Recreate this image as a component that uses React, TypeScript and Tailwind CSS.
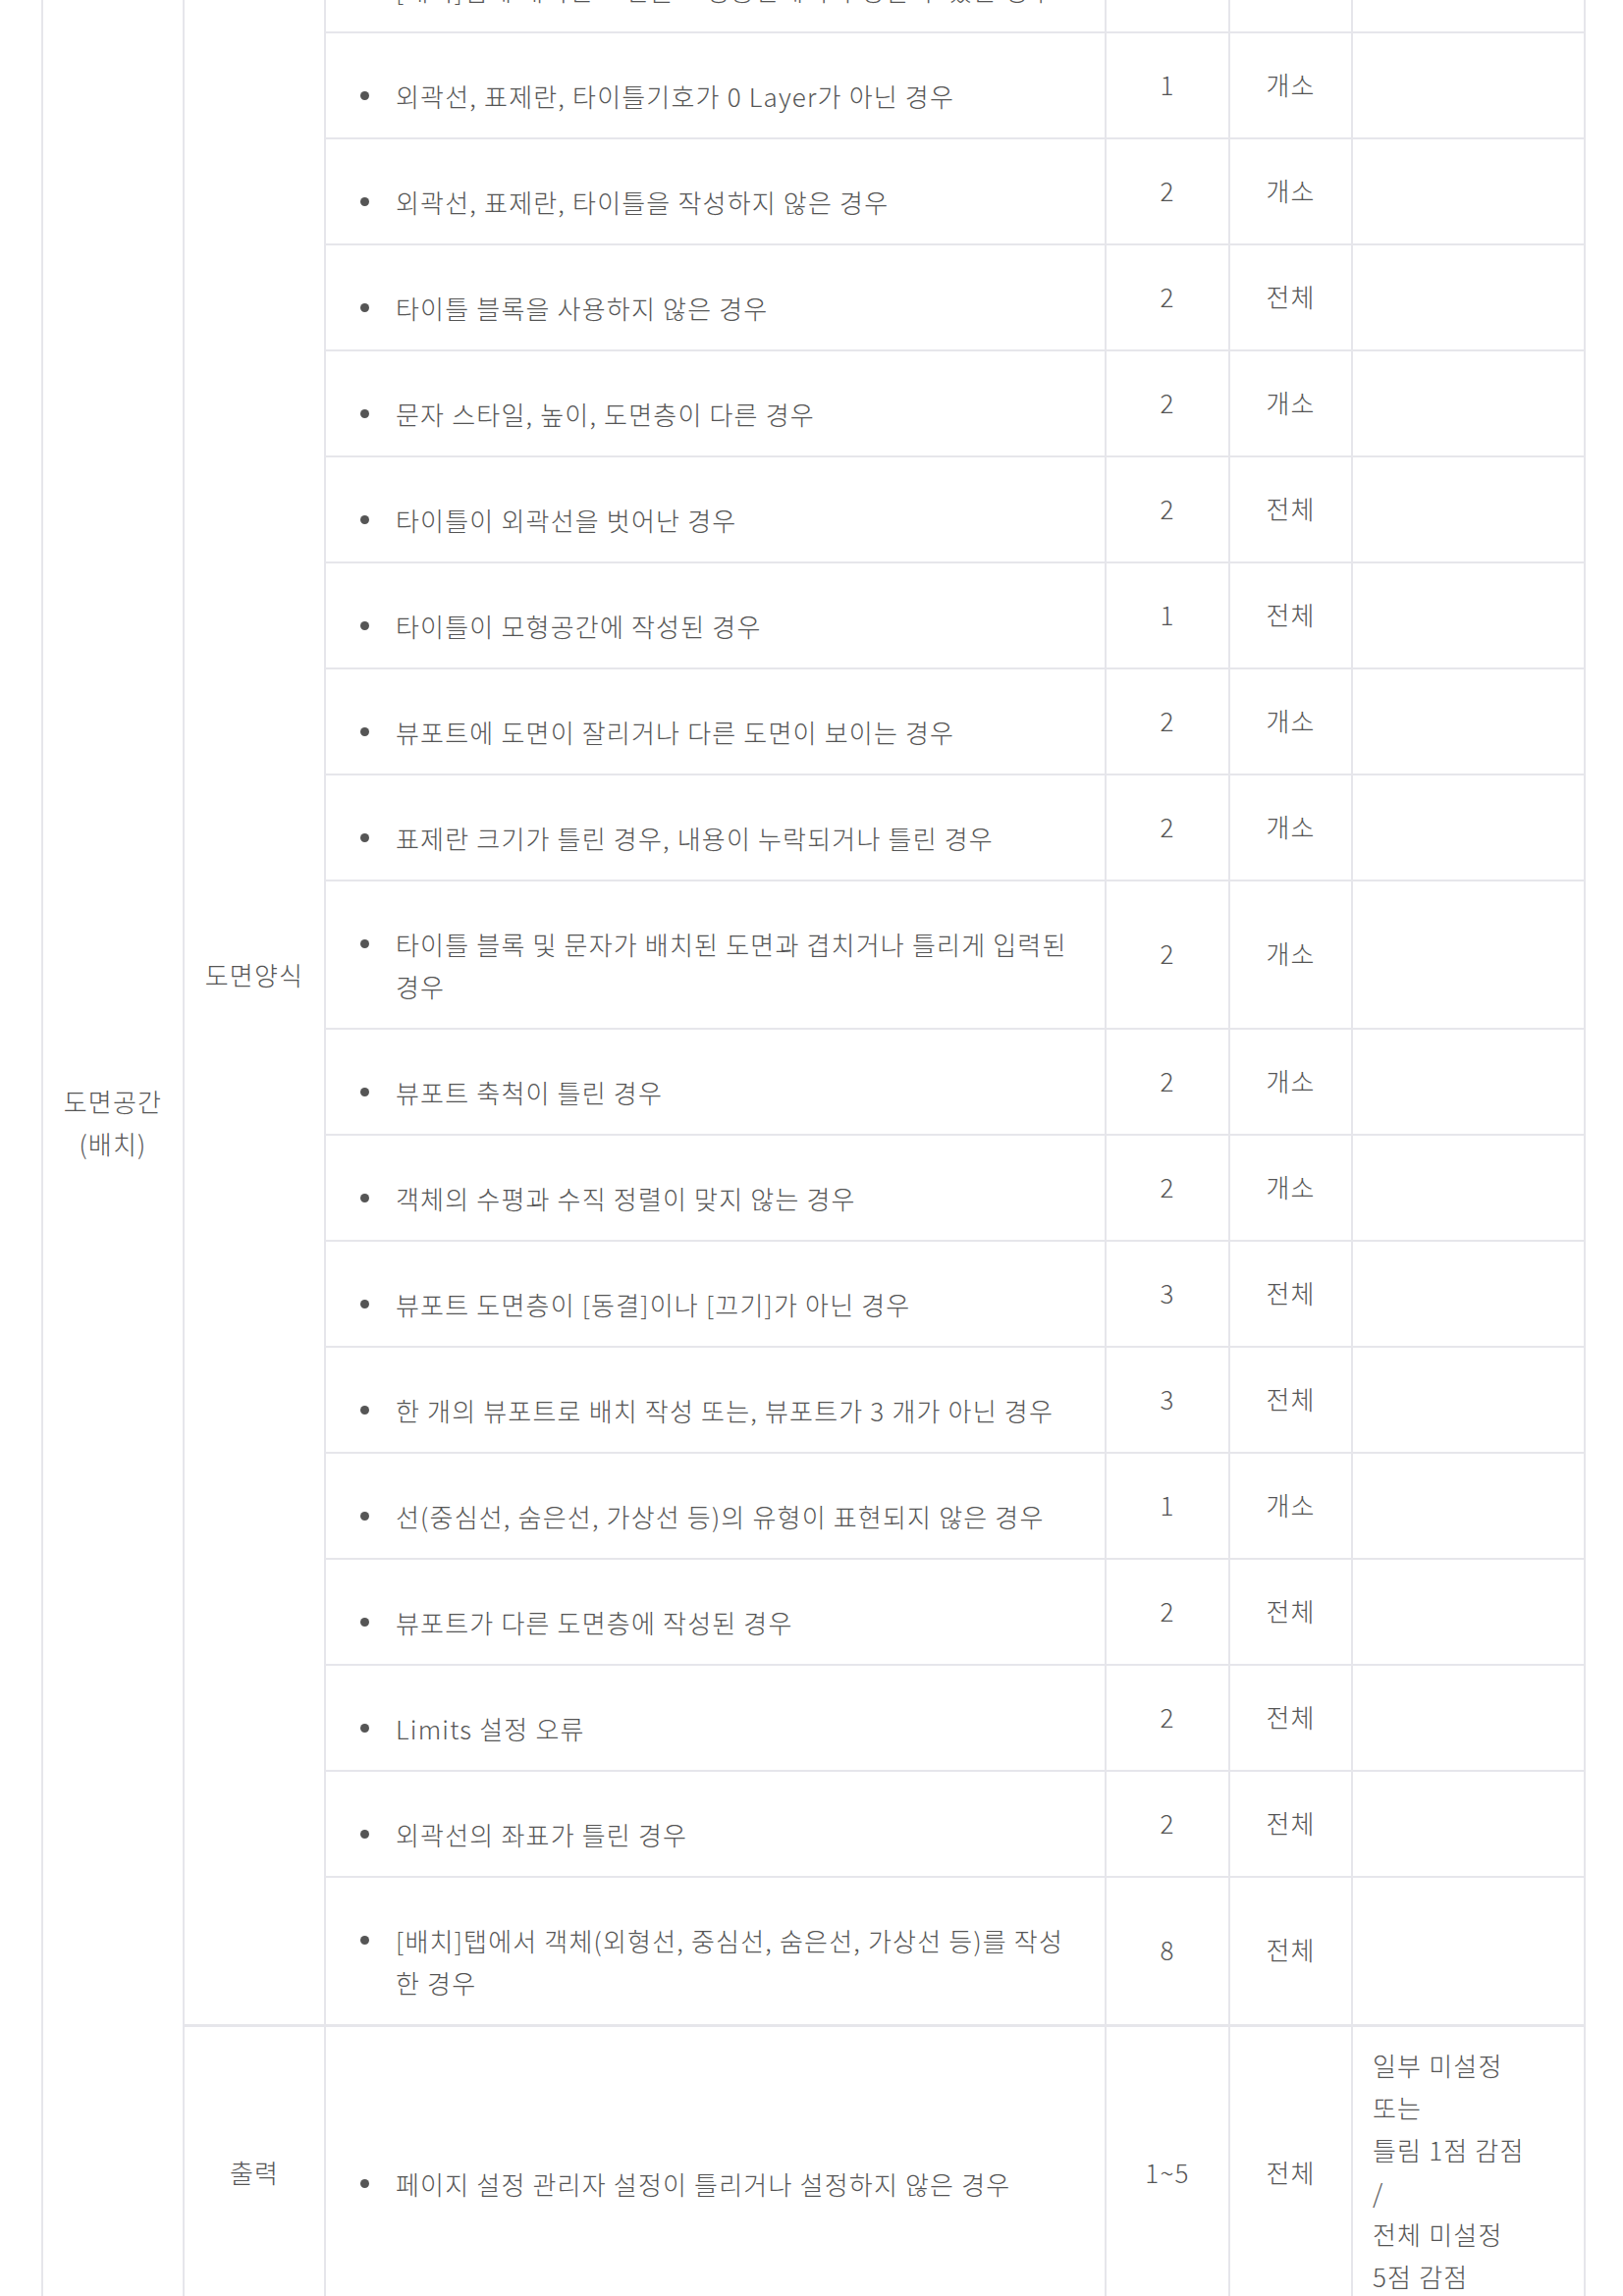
import React from 'react';

type Item = { text: string; score: string; unit: string };

const layoutItems: Item[] = [
    { text: '[배치]탭에 배치된 도면을 모형공간에서 수정할 수 있는 경우', score: '2', unit: '개소' },
    { text: '외곽선, 표제란, 타이틀기호가 0 Layer가 아닌 경우', score: '1', unit: '개소' },
    { text: '외곽선, 표제란, 타이틀을 작성하지 않은 경우', score: '2', unit: '개소' },
    { text: '타이틀 블록을 사용하지 않은 경우', score: '2', unit: '전체' },
    { text: '문자 스타일, 높이, 도면층이 다른 경우', score: '2', unit: '개소' },
    { text: '타이틀이 외곽선을 벗어난 경우', score: '2', unit: '전체' },
    { text: '타이틀이 모형공간에 작성된 경우', score: '1', unit: '전체' },
    { text: '뷰포트에 도면이 잘리거나 다른 도면이 보이는 경우', score: '2', unit: '개소' },
    { text: '표제란 크기가 틀린 경우, 내용이 누락되거나 틀린 경우', score: '2', unit: '개소' },
    { text: '타이틀 블록 및 문자가 배치된 도면과 겹치거나 틀리게 입력된 경우', score: '2', unit: '개소' },
    { text: '뷰포트 축척이 틀린 경우', score: '2', unit: '개소' },
    { text: '객체의 수평과 수직 정렬이 맞지 않는 경우', score: '2', unit: '개소' },
    { text: '뷰포트 도면층이 [동결]이나 [끄기]가 아닌 경우', score: '3', unit: '전체' },
    { text: '한 개의 뷰포트로 배치 작성 또는, 뷰포트가 3 개가 아닌 경우', score: '3', unit: '전체' },
    { text: '선(중심선, 숨은선, 가상선 등)의 유형이 표현되지 않은 경우', score: '1', unit: '개소' },
    { text: '뷰포트가 다른 도면층에 작성된 경우', score: '2', unit: '전체' },
    { text: 'Limits 설정 오류', score: '2', unit: '전체' },
    { text: '외곽선의 좌표가 틀린 경우', score: '2', unit: '전체' },
    { text: '[배치]탭에서 객체(외형선, 중심선, 숨은선, 가상선 등)를 작성한 경우', score: '8', unit: '전체' },
];

const cell = 'border-2 border-[#e6e6eb] align-middle';
const center = `${cell} pb-[4px] text-center`;

function BulletCell({ text, extra = '' }: { text: string; extra?: string }) {
    return (
        <td className={`${cell} ${extra} pl-[35px] pr-[30px] pt-[42px] pb-[21px] text-left`}>
            <div className="flex items-start">
                <span className="mt-[17px] h-[9px] w-[9px] shrink-0 rounded-full bg-[#555]" />
                <span className="ml-[27px]">{text}</span>
            </div>
        </td>
    );
}

export default function App() {
    return (
        <div className="overflow-hidden bg-white">
            <div className="-mt-[76px] pl-[42px] pr-[40px]">
                <table className="w-full table-fixed border-collapse font-['Noto_Sans_CJK_KR','Noto_Sans',sans-serif] text-[26px] font-light leading-[43px] tracking-[1.2px] text-[#555]">
                    <colgroup>
                        <col className="w-[144px]" />
                        <col className="w-[144px]" />
                        <col className="w-[795px]" />
                        <col className="w-[126px]" />
                        <col className="w-[125px]" />
                        <col className="w-[237px]" />
                    </colgroup>
                    <tbody>
                        {layoutItems.map((item, i) => (
                            <tr key={i}>
                                {i === 0 && (
                                    <td rowSpan={layoutItems.length + 1} className={center}>
                                        도면공간
                                        <br />
                                        (배치)
                                    </td>
                                )}
                                {i === 0 && (
                                    <td rowSpan={layoutItems.length} className={center}>
                                        도면양식
                                    </td>
                                )}
                                <BulletCell text={item.text} />
                                <td className={center}>{item.score}</td>
                                <td className={center}>{item.unit}</td>
                                <td className={cell} />
                            </tr>
                        ))}
                        <tr>
                            <td className={`${center} border-t-[3px]`}>출력</td>
                            <BulletCell text="페이지 설정 관리자 설정이 틀리거나 설정하지 않은 경우" extra="border-t-[3px]" />
                            <td className={`${center} border-t-[3px]`}>1~5</td>
                            <td className={`${center} border-t-[3px]`}>전체</td>
                            <td className={`${cell} border-t-[3px] pt-[17px] pb-[23px] pl-[20px] text-left`}>
                                일부 미설정
                                <br />
                                또는
                                <br />
                                틀림 1점 감점
                                <br />
                                /
                                <br />
                                전체 미설정
                                <br />
                                5점 감점
                            </td>
                        </tr>
                    </tbody>
                </table>
            </div>
        </div>
    );
}
